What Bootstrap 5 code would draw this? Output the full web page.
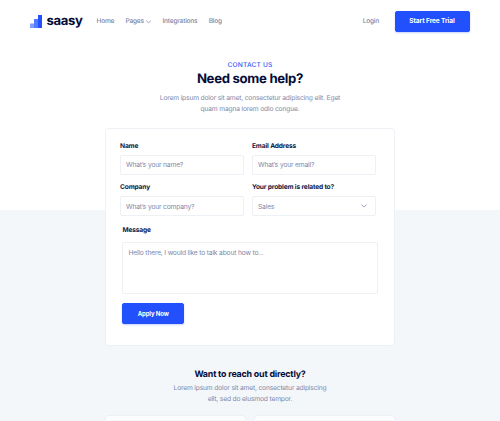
<!DOCTYPE html>
<html lang="en">
<head>
<meta charset="utf-8">
<meta name="viewport" content="width=device-width, initial-scale=1">
<title>Saasy – Contact us</title>
<link href="https://cdn.jsdelivr.net/npm/bootstrap@5.3.0/dist/css/bootstrap.min.css" rel="stylesheet">
<style>
html{overflow:hidden}
body{font-family:Inter,"Liberation Sans",sans-serif;font-size:6.7px;line-height:11px;letter-spacing:-.17px;color:#8088a8;height:421px;overflow:hidden;background:linear-gradient(#fff 210px,#f3f7fa 210px);text-rendering:geometricPrecision}
.topbar{height:43px;padding:0 30.5px 0 30px}
.brand-name{font-size:13.1px;font-weight:700;line-height:16px;color:#040c38;letter-spacing:-.35px;margin-left:4.5px;margin-top:-1px}
.main-links{margin-left:14px;gap:11.2px}
.main-links .nav-link,.login-link{padding:0;color:#8088a8;font-size:6.6px;font-weight:500;letter-spacing:-.22px}
.login-link{margin-right:15.5px}
.pages-caret{margin-left:2.5px}
.btn-saasy{--bs-btn-bg:#2250fc;--bs-btn-border-color:#2250fc;--bs-btn-color:#fff;--bs-btn-hover-bg:#1642e6;--bs-btn-hover-color:#fff;--bs-btn-border-radius:2px;--bs-btn-padding-x:0;--bs-btn-padding-y:0;--bs-btn-line-height:9px;--bs-btn-font-weight:700;letter-spacing:-.12px;box-shadow:0 1px 2px #2250fc40}
.trial{width:75px;height:21px;font-size:6.6px}
.apply{width:61.5px;height:21px;font-size:6px;margin-top:9px}
.eyebrow{font-size:6.6px;font-weight:500;letter-spacing:.18px;line-height:9px;color:#2c59fb;margin-top:17.5px}
h1{font-size:13.2px;font-weight:700;line-height:16px;letter-spacing:-.32px;color:#040c38;margin:1px 0 0}
h2{font-size:8.85px;font-weight:700;line-height:12px;letter-spacing:-.18px;color:#040c38;margin:23px 0 2px}
.intro{margin:6px 0 0}
.form-card{width:290px;height:218px;margin:13px auto 0;border:1px solid #edf0f5;border-radius:4px;padding:13px 17px 0 14px}
.form-grid{display:grid;grid-template-columns:124px 124px;column-gap:8px}
.form-label{display:block;margin:0 0 4px;font-size:6.6px;line-height:9px;font-weight:700;letter-spacing:-.14px;color:#101843}
.form-control,.form-select{height:20px;padding:0 5px;border:1px solid #edf0f5;border-radius:2px;font-size:6.7px;line-height:11px;letter-spacing:-.17px;color:#8088a8}
.form-control::placeholder{color:#8088a8;opacity:1}
.form-grid .pt-2 .form-control{padding-top:2px}
.form-select{padding-top:3px;background-image:url("data:image/svg+xml,%3Csvg xmlns='http://www.w3.org/2000/svg' viewBox='0 0 6 4'%3E%3Cpath d='M.7.8 3 3 5.3.8' fill='none' stroke='%238891b0' stroke-width='.8' stroke-linecap='round'/%3E%3C/svg%3E");background-size:6px 4px;background-position:right 8px center}
.message{width:255.6px;margin:10px 0 0 2.4px}
.message .form-label{margin-bottom:7px}
.message textarea{height:52px;padding-top:5px;resize:none}
.contact-tiles{width:290px;gap:8px;margin:10px auto 0}
.contact-tile{height:5px;flex:1;border:1px solid #edf0f5;border-bottom:0;border-radius:4px 4px 0 0}
</style>
<script src="https://cdn.jsdelivr.net/npm/bootstrap@5.3.0/dist/js/bootstrap.bundle.min.js"></script>
</head>
<body>
<header class="topbar d-flex align-items-center">
  <a class="d-flex align-items-center text-decoration-none" href="#">
    <svg width="12" height="13" viewBox="0 0 12 13" aria-hidden="true"><path fill="#7f9dff" d="M0 8.5h4V13H0z"/><path fill="#527aff" d="M4 4h4v9H4z"/><path fill="#2250fc" d="M8 0h4v13H8z"/></svg>
    <span class="brand-name">saasy</span>
  </a>
  <nav class="nav main-links flex-nowrap text-nowrap">
    <a class="nav-link" href="#">Home</a>
    <a class="nav-link d-flex align-items-center" href="#">Pages<svg class="pages-caret" width="5" height="4" viewBox="0 0 5 4" aria-hidden="true"><path d="M.4.8 2.5 2.9 4.6.8" fill="none" stroke="#8891b0" stroke-width=".8" stroke-linecap="round"/></svg></a>
    <a class="nav-link" href="#">Integrations</a>
    <a class="nav-link" href="#">Blog</a>
  </nav>
  <a class="login-link ms-auto text-decoration-none" href="#">Login</a>
  <button class="btn btn-saasy trial">Start Free Trial</button>
</header>
<main>
  <section class="text-center">
    <div class="eyebrow">CONTACT US</div>
    <h1>Need some help?</h1>
    <p class="intro">Lorem ipsum dolor sit amet, consectetur adipiscing elit. Eget<br>quam magna lorem odio congue.</p>
  </section>
  <form class="form-card bg-white">
    <div class="form-grid">
      <div><label class="form-label" for="name">Name</label><input class="form-control" id="name" placeholder="What’s your name?"></div>
      <div><label class="form-label" for="email">Email Address</label><input class="form-control" id="email" type="email" placeholder="What’s your email?"></div>
      <div class="pt-2"><label class="form-label" for="company">Company</label><input class="form-control" id="company" placeholder="What’s your company?"></div>
      <div class="pt-2"><label class="form-label" for="topic">Your problem is related to?</label><select class="form-select" id="topic"><option>Sales</option></select></div>
    </div>
    <div class="message">
      <label class="form-label" for="message">Message</label>
      <textarea class="form-control" id="message" placeholder="Hello there, I would like to talk about how to..."></textarea>
      <button class="btn btn-saasy apply d-block" type="button">Apply Now</button>
    </div>
  </form>
  <section class="text-center">
    <h2>Want to reach out directly?</h2>
    <p class="mb-0">Lorem ipsum dolor sit amet, consectetur adipiscing<br>elit, sed do eiusmod tempor.</p>
    <div class="contact-tiles d-flex"><div class="contact-tile bg-white"></div><div class="contact-tile bg-white"></div></div>
  </section>
</main>
</body>
</html>
